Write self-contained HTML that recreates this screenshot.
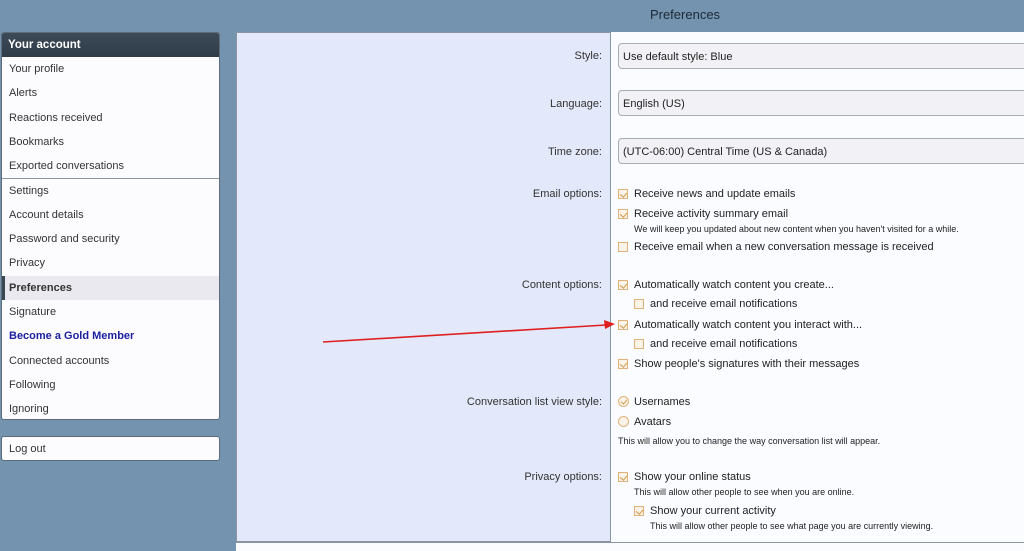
<!DOCTYPE html>
<html><head><style>
*{box-sizing:border-box;margin:0;padding:0}
body{width:1024px;height:551px;overflow:hidden;background:#7393ae;font-family:"Liberation Sans",sans-serif;font-size:11px;color:#222;position:relative}
.abs{position:absolute}
.title{left:0;width:1370px;top:7px;text-align:center;font-size:13px;color:#1d2a38}
.side{left:1px;top:32px;width:219px;height:388px;background:#fcfcff;border:1px solid #5d6c7a;border-radius:3px;overflow:hidden}
.side .hd{height:24px;background:linear-gradient(#3c4a58,#2f3c49);color:#fff;font-weight:bold;padding:6px 6px;font-size:11.5px}
.side .it{height:24.3px;padding:6px 7px;color:#333}
.side .sep{border-top:1px solid #8a96a2}
.side .sel{background:#e9e9ef;font-weight:bold;border-left:3px solid #3a4754;padding-left:4px}
.side .gold{color:#1b1f9e;font-weight:bold}
.logout{left:1px;top:436px;width:219px;height:25px;background:#fcfcff;border:1px solid #5d6c7a;border-radius:3px;padding:6px 7px;color:#333}
.main{left:236px;top:32px;width:790px;height:510px;background:#e3e9fa;border:1px solid #8995a3;border-right:none}
.right{left:610px;top:32px;width:414px;height:510px;background:#fbfcff;border-left:1px solid #8995a3}
.bot{left:236px;top:542px;width:788px;height:9px;background:#fbfcff;border-top:1px solid #8995a3}
.lbl{right:422px;text-align:right;color:#333;margin-top:1px}
.inp{left:618px;width:410px;height:26px;border:1px solid #a8adb5;border-radius:4px;background:#f2f2f6;padding:7px 4px;color:#222}
.cb{width:10px;height:10px;border:1px solid #e0b27a;background:#fbf3e8}
.cb.ck::after{content:"";position:absolute;left:2px;top:1px;width:4px;height:5px;border:solid #d39a4c;border-width:0 1.5px 1.5px 0;transform:rotate(40deg)}
.rd{width:11px;height:11px;border:1px solid #e0b27a;border-radius:50%;background:#fbf3e8}
.rd.ck::after{content:"";position:absolute;left:3px;top:1px;width:3px;height:5px;border:solid #d39a4c;border-width:0 1.5px 1.5px 0;transform:rotate(40deg)}
.t{color:#222;margin-top:1px}
.s{font-size:9px;color:#222;margin-top:1px}
</style></head><body>
<div class="abs title">Preferences</div>
<div class="abs side">
<div class="hd">Your account</div>
<div class="it">Your profile</div><div class="it">Alerts</div><div class="it">Reactions received</div><div class="it">Bookmarks</div><div class="it">Exported conversations</div>
<div class="it sep">Settings</div><div class="it">Account details</div><div class="it">Password and security</div><div class="it">Privacy</div>
<div class="it sel">Preferences</div><div class="it">Signature</div><div class="it gold">Become a Gold Member</div><div class="it">Connected accounts</div><div class="it">Following</div><div class="it">Ignoring</div>
</div>
<div class="abs logout">Log out</div>
<div class="abs main"></div>
<div class="abs right"></div>
<div class="abs bot"></div>

<div class="abs lbl" style="top:49px">Style:</div>
<div class="abs lbl" style="top:97px">Language:</div>
<div class="abs lbl" style="top:145px">Time zone:</div>
<div class="abs lbl" style="top:187px">Email options:</div>
<div class="abs lbl" style="top:278px">Content options:</div>
<div class="abs lbl" style="top:395px">Conversation list view style:</div>
<div class="abs lbl" style="top:470px">Privacy options:</div>

<div class="abs inp" style="top:43px">Use default style: Blue</div>
<div class="abs inp" style="top:90px">English (US)</div>
<div class="abs inp" style="top:138px">(UTC-06:00) Central Time (US &amp; Canada)</div>

<div class="abs cb ck" style="left:618px;top:189px"></div><div class="abs t" style="left:634px;top:187px">Receive news and update emails</div>
<div class="abs cb ck" style="left:618px;top:209px"></div><div class="abs t" style="left:634px;top:207px">Receive activity summary email</div>
<div class="abs s" style="left:634px;top:223px">We will keep you updated about new content when you haven't visited for a while.</div>
<div class="abs cb" style="left:618px;top:242px"></div><div class="abs t" style="left:634px;top:240px">Receive email when a new conversation message is received</div>

<div class="abs cb ck" style="left:618px;top:280px"></div><div class="abs t" style="left:634px;top:278px">Automatically watch content you create...</div>
<div class="abs cb" style="left:634px;top:299px"></div><div class="abs t" style="left:650px;top:297px">and receive email notifications</div>
<div class="abs cb ck" style="left:618px;top:320px"></div><div class="abs t" style="left:634px;top:318px">Automatically watch content you interact with...</div>
<div class="abs cb" style="left:634px;top:339px"></div><div class="abs t" style="left:650px;top:337px">and receive email notifications</div>
<div class="abs cb ck" style="left:618px;top:359px"></div><div class="abs t" style="left:634px;top:357px">Show people's signatures with their messages</div>

<div class="abs rd ck" style="left:618px;top:396px"></div><div class="abs t" style="left:634px;top:395px">Usernames</div>
<div class="abs rd" style="left:618px;top:416px"></div><div class="abs t" style="left:634px;top:415px">Avatars</div>
<div class="abs s" style="left:618px;top:435px">This will allow you to change the way conversation list will appear.</div>

<div class="abs cb ck" style="left:618px;top:472px"></div><div class="abs t" style="left:634px;top:470px">Show your online status</div>
<div class="abs s" style="left:634px;top:486px">This will allow other people to see when you are online.</div>
<div class="abs cb ck" style="left:634px;top:506px"></div><div class="abs t" style="left:650px;top:504px">Show your current activity</div>
<div class="abs s" style="left:650px;top:520px">This will allow other people to see what page you are currently viewing.</div>

<svg class="abs" style="left:0;top:0" width="1024" height="551"><line x1="323" y1="342" x2="606" y2="325" stroke="#e02020" stroke-width="1.6"/><polygon points="615,324 604,320 605,329" fill="#e02020"/></svg>
</body></html>
